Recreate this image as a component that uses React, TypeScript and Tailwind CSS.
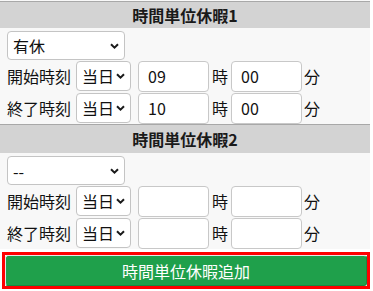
import React from "react";

const font = { fontFamily: '"Noto Sans CJK JP", "Noto Sans", sans-serif' };

function Chevron() {
  return (
    <svg width="9" height="6" viewBox="0 0 9 6" className="pointer-events-none absolute top-1/2 -translate-y-1/2 right-[6px]">
      <path d="M1 1.2 L4.5 4.6 L8 1.2" fill="none" stroke="#1a1a1a" strokeWidth="2" />
    </svg>
  );
}

function Sel({ value, options, w, h }: { value: string; options: string[]; w: string; h: string }) {
  return (
    <div className={`relative ${w} ${h} shrink-0`}>
      <select
        defaultValue={value}
        className="appearance-none w-full h-full bg-white border border-[#c4c4c4] rounded-[4px] pl-[5px] pr-[14px] text-[16px] text-[#111] leading-none outline-none"
        style={font}
      >
        {options.map((o) => (
          <option key={o}>{o}</option>
        ))}
      </select>
      <Chevron />
    </div>
  );
}

function Inp({ value }: { value: string }) {
  return (
    <input
      defaultValue={value}
      className="w-[71px] h-[31px] shrink-0 bg-white border border-[#c8c8c8] rounded-[4px] pl-[9px] text-[16px] text-[#111] outline-none"
      style={font}
    />
  );
}

function TimeRow({ label, h, m }: { label: string; h: string; m: string }) {
  return (
    <div className="flex items-center h-[32px] pl-[7px]">
      <span className="w-[66px] text-[16px] text-[#111] leading-none">{label}</span>
      <div className="ml-[3px]">
        <Sel value="当日" options={["当日", "翌日"]} w="w-[55px]" h="h-[30px]" />
      </div>
      <div className="ml-[7px]">
        <Inp value={h} />
      </div>
      <span className="ml-[3px] text-[16px] text-[#111] leading-none w-[17px]">時</span>
      <div className="ml-[2px]">
        <Inp value={m} />
      </div>
      <span className="ml-[2px] text-[16px] text-[#111] leading-none">分</span>
    </div>
  );
}

function Block({ title, kind, h, m, headerH }: { title: string; kind: string; h: string; m: string; headerH: string }) {
  return (
    <div>
      <div className={`${headerH} border-t border-[#a8a8a8] bg-[#d3d3d3] flex items-center justify-center text-[16px] font-bold text-[#1a1a1a]`}>
        {title}
      </div>
      <div className="pt-[3px] pl-[7px]">
        <Sel value={kind} options={["--", "有休", "代休"]} w="w-[118px]" h="h-[29px]" />
      </div>
      <TimeRow label="開始時刻" h={h} m={m} />
      <TimeRow label="終了時刻" h={h === "09" ? "10" : ""} m={m} />
    </div>
  );
}

export default function App() {
  return (
    <div className="w-[373px] h-[291px] bg-white" style={font}>
      <div className="w-[370px] bg-[#f8f8f8] pt-[1px]">
        <Block title="時間単位休暇1" kind="有休" h="09" m="00" headerH="h-[27px]" />
        <Block title="時間単位休暇2" kind="--" h="" m="" headerH="h-[29px]" />
      </div>
      <div className="mt-[3px] ml-[2px] w-[368px] h-[37px] border-[3px] border-[#ff0000]">
        <button
          className="block w-full h-full rounded-[3px] bg-[#1fa04b] text-white text-[16px] border border-t-[#e6e6e6] border-l-[#e6e6e6] border-r-[#19893f] border-b-[#19893f]"
          style={font}
        >
          時間単位休暇追加
        </button>
      </div>
    </div>
  );
}
